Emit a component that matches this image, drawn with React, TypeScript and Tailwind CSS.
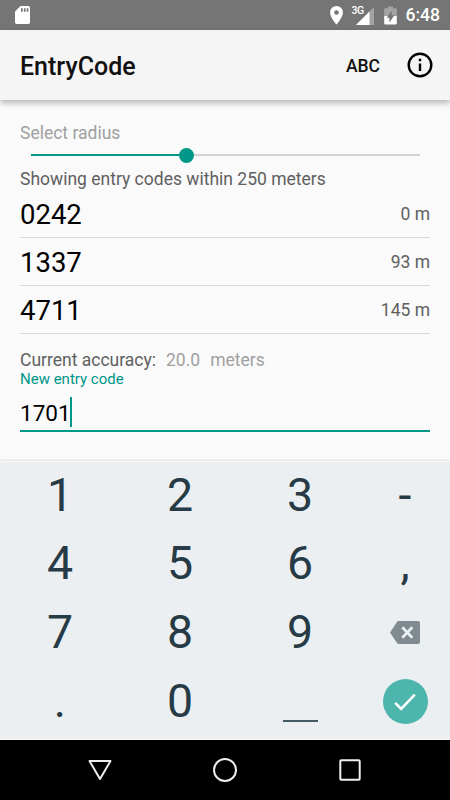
import { useState } from 'react'

interface EntryCode {
  code: string
  distance: string
}

const entries: EntryCode[] = [
  { code: '0242', distance: '0 m' },
  { code: '1337', distance: '93 m' },
  { code: '4711', distance: '145 m' },
]

const keys = ['1', '2', '3', '-', '4', '5', '6', ',', '7', '8', '9', 'del', '.', '0', 'space', 'done']

function StatusBar() {
  return (
    <div className="h-[30px] shrink-0 bg-[#757575] flex items-center justify-between pl-[15px] pr-[10px] text-white">
      <svg width="15" height="18" viewBox="0 0 15 18">
        <path d="M5.5 0H13.3Q15 0 15 1.7V16.3Q15 18 13.3 18H1.7Q0 18 0 16.3V5.5Z" fill="#fff" />
        <path d="M6 2.2h1.7v3.5H6zM8.9 2.2h1.7v3.5H8.9zM11.7 2.2h1.7v3.5h-1.7z" fill="#757575" />
      </svg>
      <div className="flex items-center">
        <svg width="13" height="19" viewBox="0 0 13 19">
          <path d="M6.5 0A6.4 6.4 0 0 0 0.1 6.4C0.1 11.2 6.5 18.6 6.5 18.6S12.9 11.2 12.9 6.4A6.4 6.4 0 0 0 6.5 0ZM6.5 8.8A2.3 2.3 0 1 1 6.5 4.2A2.3 2.3 0 0 1 6.5 8.8Z" fill="#fff" />
        </svg>
        <div className="relative ml-[9px] h-[19px] w-[22px]">
          <svg className="absolute left-[4px] top-[1px]" width="18" height="18" viewBox="0 0 18 18">
            <path d="M18 0V18H0Z" fill="#a3a3a3" />
            <path d="M13.5 4.5V18H0Z" fill="#fff" />
          </svg>
          <span className="absolute left-0 top-0 text-[10.5px] leading-[10px] font-medium tracking-[-0.4px]">3G</span>
        </div>
        <svg className="ml-[10px]" width="13" height="19" viewBox="0 0 13 19">
          <path d="M4 0.5h5v1.8h2.8q1 0 1 1V10H0.2V3.3q0-1 1-1H4z" fill="#a3a3a3" />
          <path d="M0.2 10H12.8V17.5q0 1-1 1H1.2q-1 0-1-1z" fill="#fff" />
          <path d="M7.6 4.8V9.3H10.4L5.4 16.6V11.8H2.8Z" fill="#757575" />
        </svg>
        <span className="ml-[9px] pt-px text-[17.5px] leading-[29px] font-medium">6:48</span>
      </div>
    </div>
  )
}

function AppBar() {
  return (
    <header className="relative z-10 h-[70px] shrink-0 bg-[#f5f5f5] flex items-center pl-5 pr-[17px] text-[#111] shadow-[0_3px_6px_rgba(0,0,0,0.28)]">
      <h1 className="grow text-[25px] leading-8 font-medium pt-[3px]">EntryCode</h1>
      <button className="pt-px text-[17.5px] leading-6 font-medium">ABC</button>
      <svg className="ml-[27px]" width="26" height="26" viewBox="0 0 26 26">
        <circle cx="13" cy="13" r="11.3" fill="none" stroke="#000" strokeWidth="2.4" />
        <path d="M11.8 6.8h2.4v2.4h-2.4zM11.8 11.5h2.4v7.5h-2.4z" fill="#000" />
      </svg>
    </header>
  )
}

function KeyLabel({ name }: { name: string }) {
  if (name === 'del') {
    return (
      <svg width="30" height="23" viewBox="0 0 30 23">
        <path d="M8.8 0H28Q30 0 30 2V21Q30 23 28 23H8.8Q7.6 23 7 22L0 11.5L7 1Q7.6 0 8.8 0Z" fill="#7f8b90" />
        <path d="M12.3 6.3L22.3 16.7M22.3 6.3L12.3 16.7" stroke="#eceff1" strokeWidth="2.7" />
      </svg>
    )
  }
  if (name === 'done') {
    return (
      <span className="size-[45px] rounded-full bg-[#4db6ac] flex items-center justify-center">
        <svg width="22" height="18" viewBox="0 0 22 18">
          <path d="M1.2 9.8L7.2 15.8L20.8 1.6" fill="none" stroke="#fff" strokeWidth="2.6" />
        </svg>
      </span>
    )
  }
  if (name === 'space') {
    return <span className="mt-[39px] h-[2px] w-[35px] bg-[#455a64]" />
  }
  return <>{name}</>
}

export default function App() {
  const [value, setValue] = useState('1701')

  function handlePress(key: string) {
    if (key === 'done') return
    if (key === 'del') setValue((v) => v.slice(0, -1))
    else setValue((v) => v + (key === 'space' ? ' ' : key))
  }

  return (
    <div className="w-[450px] h-[800px] flex flex-col overflow-hidden bg-[#fafafa] font-[Roboto,sans-serif]">
      <StatusBar />
      <AppBar />

      <main className="h-[361px] shrink-0 px-5 pt-5 text-[17.5px] text-[#606060]">
        <p className="h-[26px] leading-[26px] text-[#a0a0a0]">Select radius</p>
        <div className="h-[18px] mx-[10.5px] flex items-center">
          <div className="h-[2.5px] w-[148px] bg-[#009688]" />
          <div className="size-[15px] rounded-full bg-[#009688]" />
          <div className="h-[2px] grow bg-[#d3d3d3]" />
        </div>
        <p className="mt-[3px] h-6 leading-[25px]">Showing entry codes within 250 meters</p>

        <ul>
          {entries.map((e) => (
            <li
              key={e.code}
              className="h-12 first:h-[47px] flex items-center justify-between border-b border-[#dadada]"
            >
              <span className="pt-0.5 text-[27.5px] leading-8 text-black">{e.code}</span>
              <span className="leading-6">{e.distance}</span>
            </li>
          ))}
        </ul>

        <div className="mt-[15px] h-5 leading-[22px] flex">
          <span>Current accuracy:</span>
          <span className="ml-[10px] text-[#a0a0a0]">20.0</span>
          <span className="ml-[10px] text-[#a0a0a0]">meters</span>
        </div>
        <label className="block h-5 text-[15px] leading-5 text-[#009688]">New entry code</label>
        <div className="mt-2 h-[35px] flex items-start border-b-2 border-[#009688]">
          <span className="text-[22.5px] leading-8 text-black">{value}</span>
          <span className="-ml-px h-[30px] w-[2px] bg-[#009688]" />
        </div>
      </main>

      {/* Numeric keypad */}
      <div className="relative h-[279px] shrink-0 grid grid-cols-[120px_120px_120px_90px] grid-rows-[67px_69px_69px_69px] content-start bg-[#eceff1] text-[46.5px] leading-none text-[#263b45] shadow-[0_-1px_2px_rgba(0,0,0,0.1)] border-y border-[#fafafa]">
        {keys.map((key) => (
          <button key={key} onClick={() => handlePress(key)} className="flex items-center justify-center">
            <KeyLabel name={key} />
          </button>
        ))}
      </div>

      {/* System navigation */}
      <nav className="h-[60px] shrink-0 bg-black flex items-center justify-center gap-[101px]">
        <svg width="24" height="24" viewBox="0 0 24 24" fill="none" stroke="#eee" strokeWidth="2" strokeLinejoin="round">
          <path d="M1.5 3H22.5L12 21Z" />
        </svg>
        <svg width="24" height="24" viewBox="0 0 24 24" fill="none" stroke="#eee" strokeWidth="2">
          <circle cx="12" cy="12" r="11" />
        </svg>
        <svg width="24" height="24" viewBox="0 0 24 24" fill="none" stroke="#eee" strokeWidth="2">
          <rect x="2.3" y="2.3" width="19.4" height="19.4" rx="1" />
        </svg>
      </nav>
    </div>
  )
}
